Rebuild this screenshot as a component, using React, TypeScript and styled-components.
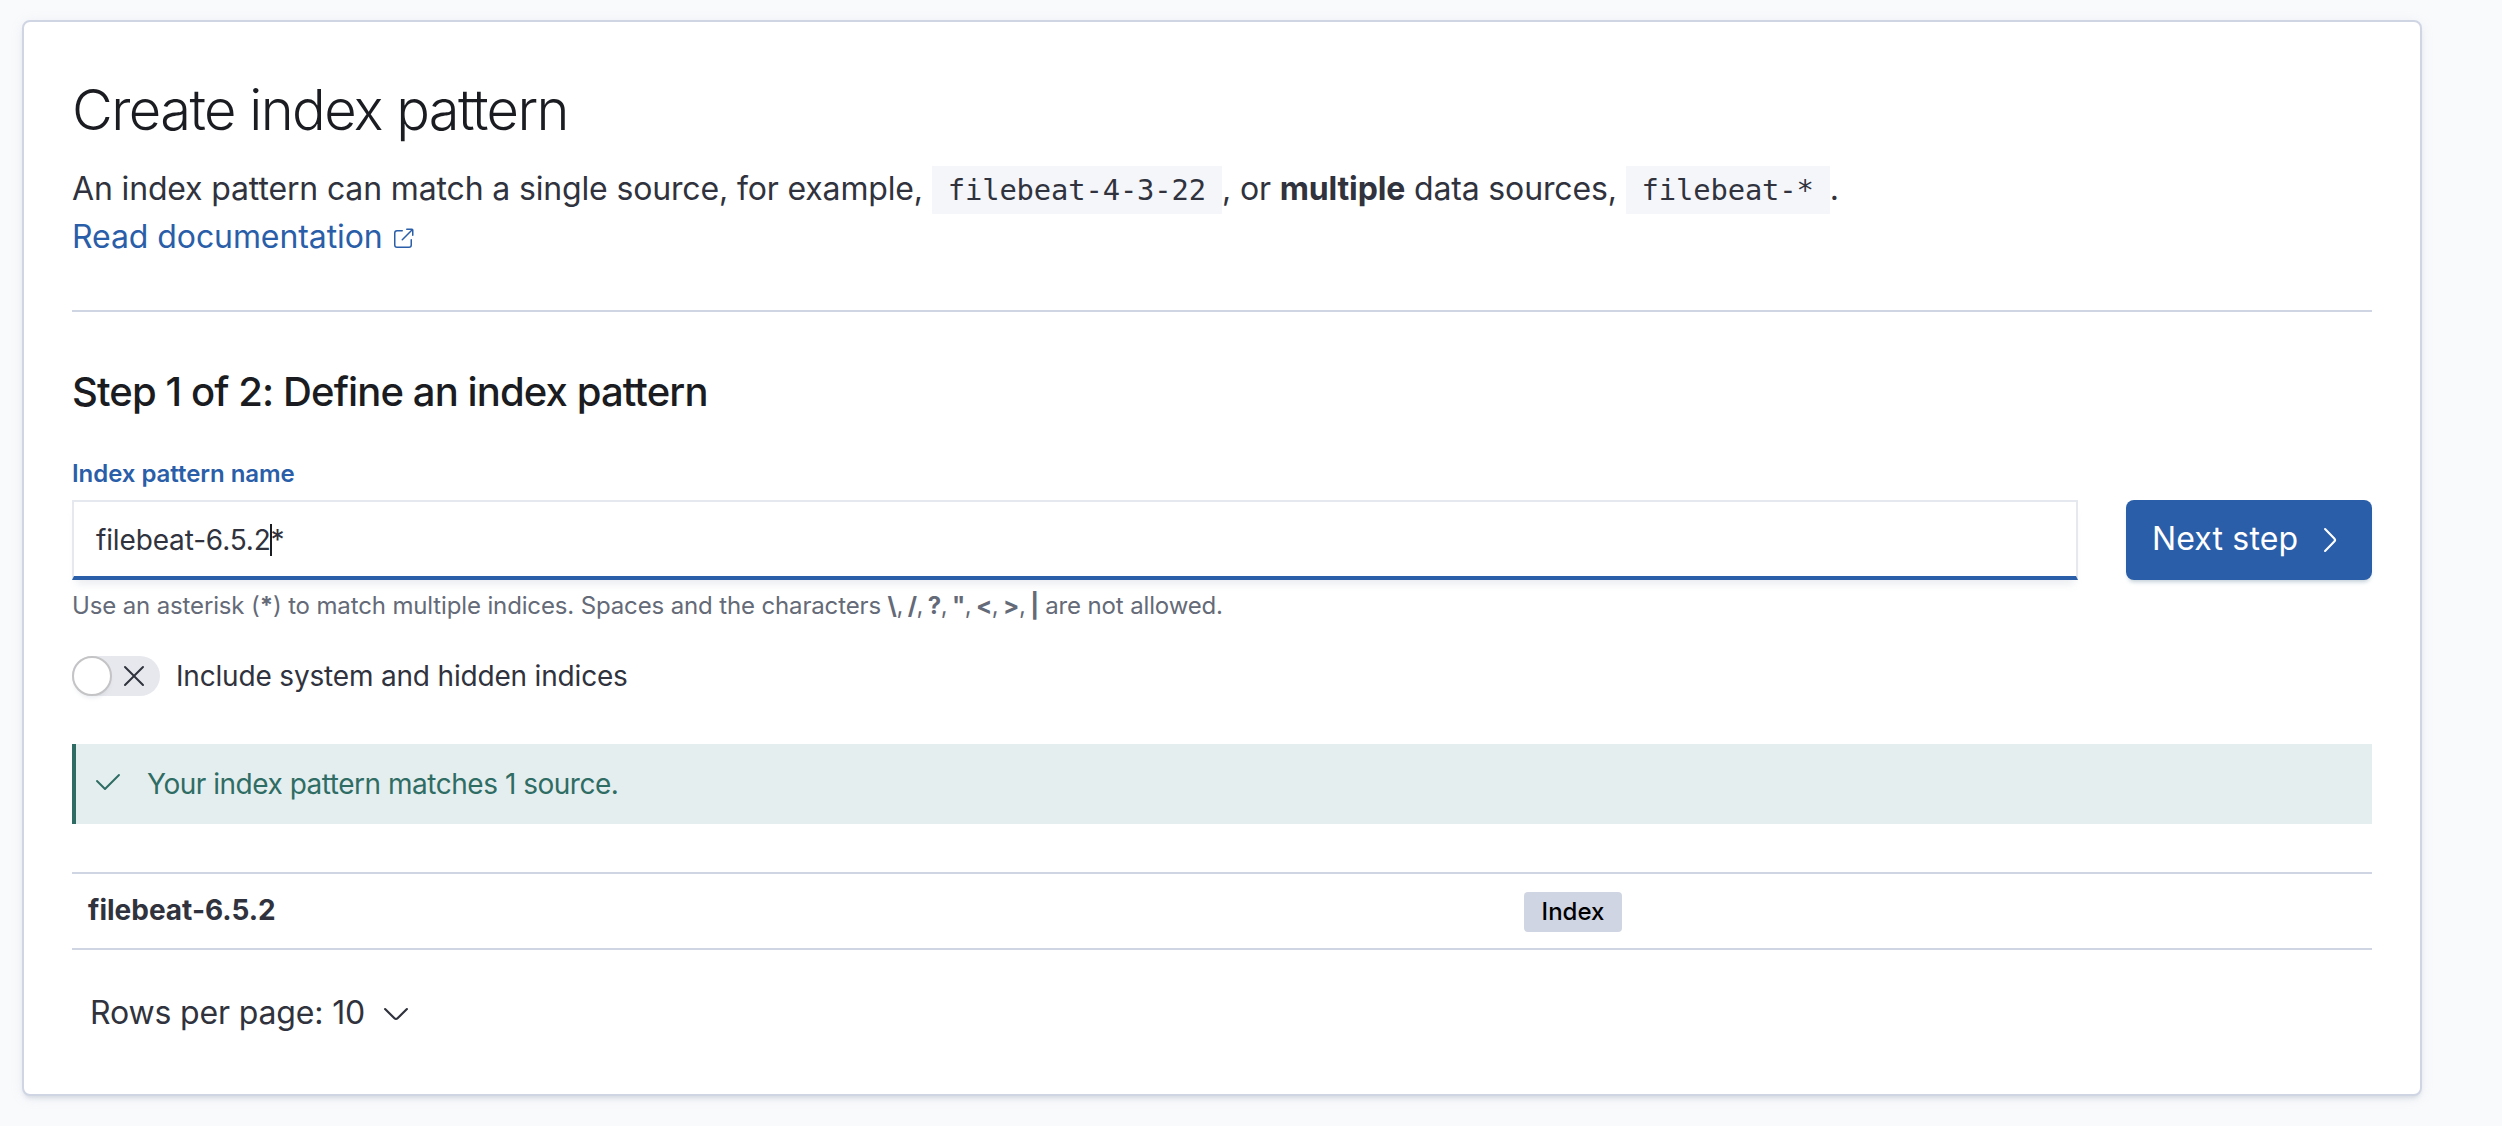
import React, { useState } from "react";
import styled, { createGlobalStyle } from "styled-components";

const colors = {
  page: "#f9fafc",
  text: "#30333d",
  title: "#1a1c21",
  subdued: "#646a77",
  primary: "#2a5ea8",
  border: "#d0d5e4",
  success: "#2f6d64",
  successBg: "#e5eeef",
};

const GlobalStyle = createGlobalStyle`
  *, *::before, *::after { box-sizing: border-box; }
  body {
    margin: 0;
    background: ${colors.page};
    color: ${colors.text};
    font-family: Inter, "Liberation Sans", sans-serif;
    font-kerning: normal;
    letter-spacing: -0.15px;
  }
  h1, h2, p { margin: 0; }
  button { font-family: inherit; letter-spacing: inherit; border: 0; cursor: pointer; }
`;

const Page = styled.main`
  padding: 20px 80px 30px 22px;
`;

const Panel = styled.section`
  height: 1076px;
  padding: 48px;
  background: #fff;
  border: 2px solid ${colors.border};
  border-radius: 8px;
  box-shadow: 0 4px 4px -2px rgba(152, 162, 179, 0.3), 0 2px 14px -2px rgba(152, 162, 179, 0.2);
`;

const PageTitle = styled.h1`
  color: ${colors.title};
  font-size: 56px;
  line-height: 80px;
  font-weight: 300;
  letter-spacing: -1.57px;
`;

const Description = styled.p`
  margin-top: 15px;
  font-size: 32px;
  line-height: 48px;
  letter-spacing: -0.15px;
`;

const Code = styled.code`
  display: inline-block;
  height: 48px;
  margin: 1px 0 -1px;
  padding: 0 16px;
  vertical-align: top;
  background: #f5f6fa;
  font-family: "DejaVu Sans Mono", monospace;
  font-size: 28.8px;
  line-height: 48px;
  letter-spacing: -0.12px;
`;

const DocLink = styled.a`
  display: inline-flex;
  align-items: center;
  gap: 8px;
  color: ${colors.primary};
  letter-spacing: -0.08px;
  text-decoration: none;

  svg {
    margin-top: 4px;
  }
`;

const Divider = styled.hr`
  height: 2px;
  margin: 49px 0 48px;
  border: 0;
  background: ${colors.border};
`;

const StepTitle = styled.h2`
  color: ${colors.title};
  font-size: 40px;
  line-height: 64px;
  font-weight: 500;
  letter-spacing: -0.89px;
`;

const FormRow = styled.div`
  display: flex;
  gap: 48px;
  align-items: flex-start;
  margin-top: 32px;
`;

const Field = styled.div`
  width: 2006px;
`;

const Label = styled.label`
  display: block;
  margin-bottom: 8px;
  color: ${colors.primary};
  font-size: 24px;
  line-height: 36px;
  font-weight: 600;
  letter-spacing: -0.05px;
`;

const TextField = styled.div`
  display: flex;
  align-items: center;
  height: 80px;
  padding: 2px 22px 0;
  border: 2px solid #e6e8ef;
  border-bottom: 4px solid ${colors.primary};
  font-size: 28px;
  line-height: 32px;
  letter-spacing: -0.15px;
  box-shadow: 0 8px 8px -4px rgba(152, 162, 179, 0.2);
`;

const Caret = styled.span`
  width: 2px;
  height: 32px;
  margin: 0 -1px 0 -1px;
  background: #1a1c21;
`;

const HelpText = styled.p`
  margin-top: 8px;
  color: ${colors.subdued};
  font-size: 24px;
  line-height: 36px;
  letter-spacing: -0.14px;
`;

const Forbidden = styled.span`
  letter-spacing: -0.5px;
  word-spacing: -1.4px;
`;

const NextButton = styled.button`
  display: flex;
  align-items: center;
  justify-content: space-between;
  width: 246px;
  height: 80px;
  margin-top: 44px;
  padding: 0 26px;
  border-radius: 8px;
  background: ${colors.primary};
  color: #fff;
  font-size: 32px;
  line-height: 46px;
  letter-spacing: 0.15px;
  box-shadow: 0 4px 4px -2px rgba(54, 97, 126, 0.3);

  span {
    padding-bottom: 2px;
  }
`;

const SwitchRow = styled.div`
  display: flex;
  align-items: center;
  gap: 16px;
  height: 40px;
  margin-top: 32px;
  font-size: 28px;
  letter-spacing: -0.18px;
`;

const Track = styled.button`
  display: flex;
  align-items: center;
  width: 88px;
  height: 40px;
  padding: 0;
  border-radius: 20px;
  background: #e7e8ed;
  color: ${colors.text};
`;

const Thumb = styled.span`
  width: 40px;
  height: 40px;
  margin-right: 6px;
  border: 2px solid #c4c4c6;
  border-radius: 50%;
  background: #fff;
  box-shadow: 0 4px 4px -2px rgba(152, 162, 179, 0.2);
`;

const Callout = styled.div`
  display: flex;
  align-items: center;
  gap: 23px;
  height: 80px;
  margin-top: 48px;
  padding-left: 16px;
  border-left: 4px solid ${colors.success};
  background: ${colors.successBg};
  color: ${colors.success};
  font-size: 28px;
  letter-spacing: -0.48px;

  svg {
    margin-bottom: 4px;
  }
`;

const TableRow = styled.div`
  display: flex;
  align-items: center;
  height: 78px;
  margin-top: 48px;
  padding: 0 16px;
  border: solid ${colors.border};
  border-width: 2px 0;
`;

const NameCell = styled.strong`
  width: 1436px;
  padding-bottom: 2px;
  font-size: 28px;
  line-height: 42px;
  font-weight: 700;
  letter-spacing: 0;
`;

const Badge = styled.span`
  width: 98px;
  height: 40px;
  margin-top: 2px;
  border-radius: 4px;
  background: #d0d5e3;
  color: #000;
  font-size: 24px;
  line-height: 40px;
  font-weight: 500;
  letter-spacing: 0;
  text-align: center;
`;

const RowsButton = styled.button`
  display: flex;
  align-items: center;
  gap: 15px;
  height: 64px;
  margin-top: 30px;
  padding: 0 18px;
  background: none;
  color: ${colors.text};
  font-size: 32px;

  svg {
    margin-top: 4px;
  }
`;

const Svg = styled.svg`
  flex: none;
  fill: currentColor;
`;

const paths = {
  popout:
    "M13 8.5a.5.5 0 1 1 1 0V12a2 2 0 0 1-2 2H4a2 2 0 0 1-2-2V4a2 2 0 0 1 2-2h3.5a.5.5 0 0 1 0 1H4a1 1 0 0 0-1 1v8a1 1 0 0 0 1 1h8a1 1 0 0 0 1-1V8.5zm-5.12.339a.5.5 0 1 1-.706-.707L13.305 2H10.5a.5.5 0 1 1 0-1H14a1 1 0 0 1 1 1v3.5a.5.5 0 1 1-1 0V2.72L7.88 8.838z",
  check:
    "M6.5 12a.502.502 0 0 1-.354-.146l-4-4a.502.502 0 0 1 .708-.708L6.5 10.793l6.646-6.647a.502.502 0 0 1 .708.708l-7 7A.502.502 0 0 1 6.5 12",
  arrowRight:
    "M5.157 13.069l4.611-4.685a.546.546 0 0 0 0-.768L5.158 2.93a.552.552 0 0 1 0-.771.53.53 0 0 1 .759 0l4.61 4.684a1.65 1.65 0 0 1 0 2.312l-4.61 4.684a.53.53 0 0 1-.76 0 .552.552 0 0 1 0-.771z",
  arrowDown:
    "M13.069 5.157L8.384 9.768a.546.546 0 0 1-.768 0L2.93 5.158a.552.552 0 0 0-.771 0 .53.53 0 0 0 0 .759l4.684 4.61c.641.631 1.672.63 2.312 0l4.684-4.61a.53.53 0 0 0 0-.76.552.552 0 0 0-.771 0z",
  cross:
    "M7.293 8 3.146 3.854a.5.5 0 1 1 .708-.708L8 7.293l4.146-4.147a.5.5 0 0 1 .708.708L8.707 8l4.147 4.146a.5.5 0 0 1-.708.708L8 8.707l-4.146 4.147a.5.5 0 0 1-.708-.708L7.293 8z",
};

function Icon({ name, size = 32 }: { name: keyof typeof paths; size?: number }) {
  return (
    <Svg width={size} height={size} viewBox="0 0 16 16" aria-hidden="true">
      <path d={paths[name]} />
    </Svg>
  );
}

const forbidden = ["\\", "/", "?", '"', "<", ">"];

export default function App() {
  const [hidden, setHidden] = useState(false);
  return (
    <>
      <GlobalStyle />
      <Page>
        <Panel>
          <PageTitle>Create index pattern</PageTitle>
          <Description>
            An index pattern can match a single source, for example, <Code>filebeat-4-3-22</Code>, or{" "}
            <strong>multiple</strong> data sources, <Code>filebeat-*</Code>.
            <br />
            <DocLink>
              Read documentation
              <Icon name="popout" size={24} />
            </DocLink>
          </Description>
          <Divider />
          <StepTitle>Step 1 of 2: Define an index pattern</StepTitle>
          <FormRow>
            <Field>
              <Label>Index pattern name</Label>
              <TextField>
                filebeat-6.5.2
                <Caret />*
              </TextField>
              <HelpText>
                Use an asterisk (<strong>*</strong>) to match multiple indices. Spaces and the characters{" "}
                <Forbidden>
                  {forbidden.map((c) => (
                    <React.Fragment key={c}>
                      <strong>{c}</strong>,{" "}
                    </React.Fragment>
                  ))}
                  <strong>|</strong>
                </Forbidden>{" "}
                are not allowed.
              </HelpText>
            </Field>
            <NextButton>
              <span>Next step</span>
              <Icon name="arrowRight" />
            </NextButton>
          </FormRow>
          <SwitchRow>
            <Track role="switch" aria-checked={hidden} onClick={() => setHidden(!hidden)}>
              <Thumb />
              <Icon name="cross" />
            </Track>
            <span>Include system and hidden indices</span>
          </SwitchRow>
          <Callout>
            <Icon name="check" />
            Your index pattern matches 1 source.
          </Callout>
          <TableRow>
            <NameCell>filebeat-6.5.2</NameCell>
            <Badge>Index</Badge>
          </TableRow>
          <RowsButton>
            Rows per page: 10
            <Icon name="arrowDown" />
          </RowsButton>
        </Panel>
      </Page>
    </>
  );
}
